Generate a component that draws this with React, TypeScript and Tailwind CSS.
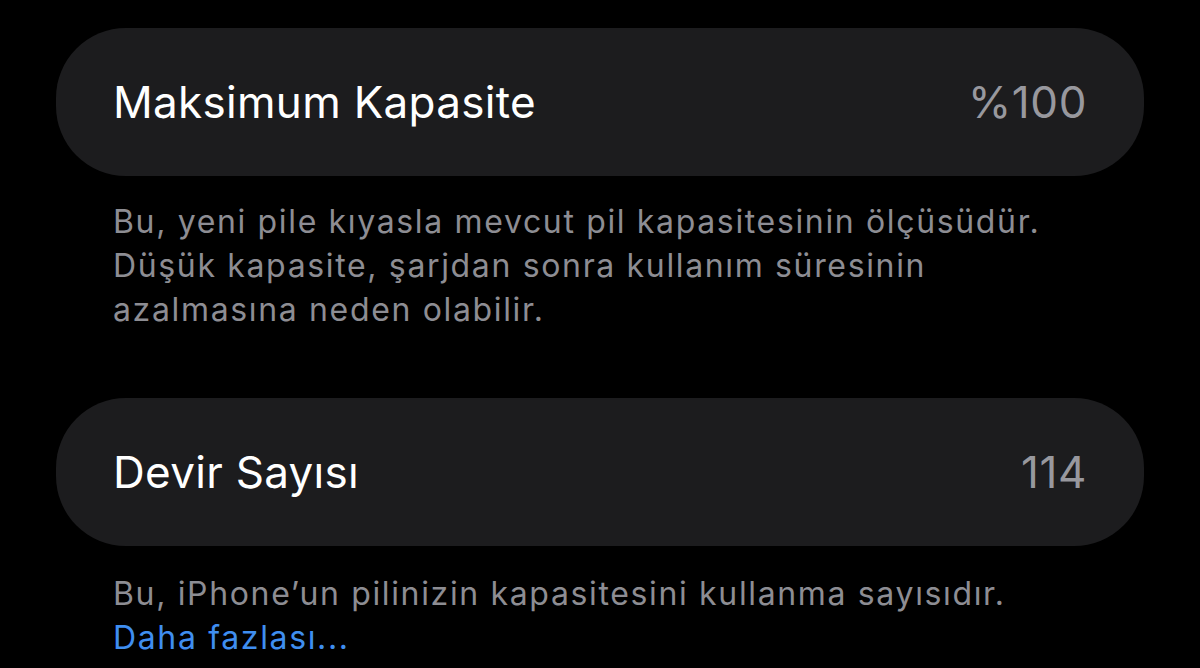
import React from "react";

export default function App() {
  const font = { fontFamily: 'Inter, "Noto Sans", sans-serif' };
  return (
    <div className="w-[1200px] h-[668px] bg-black overflow-hidden px-[56px]" style={font}>
      <div className="mt-[28px] h-[148px] rounded-[70px] bg-[#1c1c1e] flex items-center justify-between pl-[57px] pr-[57px]">
        <span className="text-[44px] text-white tracking-[0.3px]">Maksimum Kapasite</span>
        <span className="text-[44px] text-[#98989e] tracking-[0.6px]">%100</span>
      </div>
      <div className="pt-[24px] pl-[57px] text-[32px] leading-[44px] tracking-[1.65px] text-[#8d8d93] whitespace-nowrap">
        <p>Bu, yeni pile kıyasla mevcut pil kapasitesinin ölçüsüdür.</p>
        <p>Düşük kapasite, şarjdan sonra kullanım süresinin</p>
        <p>azalmasına neden olabilir.</p>
      </div>
      <div className="mt-[66px] h-[148px] rounded-[70px] bg-[#1c1c1e] flex items-center justify-between pl-[57px] pr-[57px]">
        <span className="text-[44px] text-white tracking-[0.3px]">Devir Sayısı</span>
        <span className="text-[44px] text-[#98989e] tracking-[0.6px]">114</span>
      </div>
      <div className="pt-[26px] pl-[57px] text-[32px] leading-[44px] tracking-[1.65px] text-[#8d8d93] whitespace-nowrap">
        <p>Bu, iPhone’un pilinizin kapasitesini kullanma sayısıdır.</p>
        <p className="text-[#3f8ef0]">Daha fazlası...</p>
      </div>
    </div>
  );
}
